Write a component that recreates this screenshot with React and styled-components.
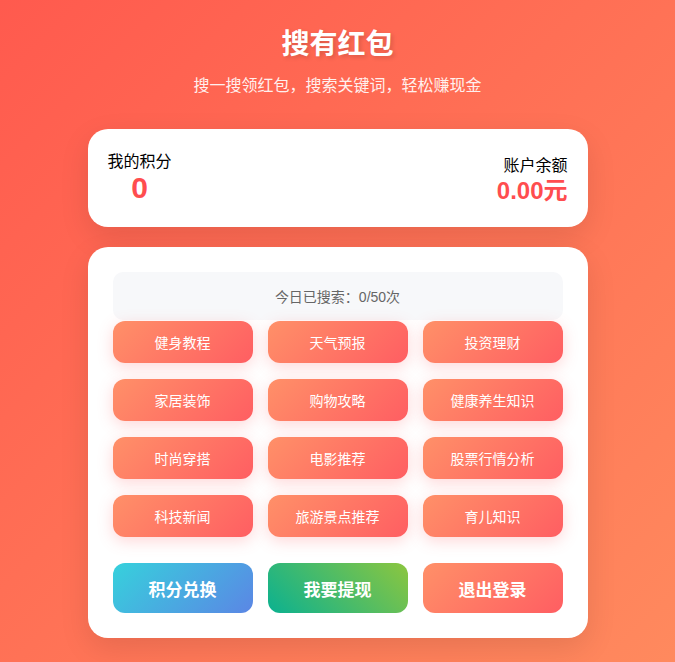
import React from 'react';
import styled, { createGlobalStyle } from 'styled-components';

const GlobalStyle = createGlobalStyle`
  html, body {
    margin: 0;
    padding: 0;
  }
  body {
    font-family: "Liberation Sans", "Noto Sans CJK SC", sans-serif;
    background: linear-gradient(135deg, #ff5a4e 0%, #ff8a5e 100%);
    min-height: 100vh;
  }
`;

const Page = styled.div`
  max-width: 500px;
  margin: 0 auto;
  padding: 21px 0 20px;
`;

const Header = styled.div`
  text-align: center;
  color: #fff;
  margin-bottom: 32px;
`;

const Title = styled.h1`
  margin: 0;
  padding-top: 4px;
  font-size: 28px;
  line-height: 40px;
  font-weight: bold;
  text-shadow: 2px 2px 4px rgba(0, 0, 0, 0.15);
`;

const Subtitle = styled.p`
  margin: 10px 0 0;
  font-size: 16px;
  line-height: 22px;
  opacity: 0.9;
`;

const Card = styled.div`
  background: #fff;
  border-radius: 20px;
  box-shadow: 0 10px 30px rgba(0, 0, 0, 0.1);
  padding: ${(p) => p.$pad || '20px'};
  margin-bottom: 20px;
`;

const BalanceRow = styled.div`
  display: flex;
  justify-content: space-between;
  align-items: center;
  height: 58px;
`;

const Stat = styled.div`
  display: flex;
  flex-direction: column;
  align-items: ${(p) => (p.$right ? 'flex-end' : 'center')};
  padding-top: ${(p) => (p.$right ? '6px' : '0')};
`;

const StatLabel = styled.div`
  font-size: 16px;
  line-height: 20px;
  color: #000;
`;

const StatValue = styled.div`
  font-size: ${(p) => p.$size || '30px'};
  line-height: ${(p) => (p.$size ? '30px' : '32px')};
  font-weight: bold;
  color: #ff4d4f;
`;

const Counter = styled.div`
  background: #f7f8fa;
  border-radius: 10px;
  height: 48px;
  display: flex;
  align-items: center;
  justify-content: center;
  font-size: 14px;
  color: #666;
  margin-bottom: 1px;
`;

const KeywordGrid = styled.div`
  display: grid;
  grid-template-columns: repeat(3, 1fr);
  column-gap: 15px;
  row-gap: 16px;
`;

const Keyword = styled.button`
  height: 42px;
  border: none;
  border-radius: 12px;
  background: linear-gradient(135deg, #ff9068 0%, #ff5e62 100%);
  color: #fff;
  font-family: inherit;
  font-size: 14px;
  box-shadow: 0 4px 15px rgba(255, 94, 98, 0.25);
  cursor: pointer;
`;

const Actions = styled.div`
  display: grid;
  grid-template-columns: repeat(3, 1fr);
  column-gap: 15px;
  margin-top: 26px;
`;

const gradients = {
  blue: 'linear-gradient(135deg, #36d1dc 0%, #5b86e5 100%)',
  green: 'linear-gradient(45deg, #0bb190 0%, #8cc63f 100%)',
  red: 'linear-gradient(135deg, #ff9068 0%, #ff5e62 100%)',
};

const ActionButton = styled.button`
  height: 50px;
  border: none;
  border-radius: 12px;
  background: ${(p) => gradients[p.$tone]};
  color: #fff;
  font-family: inherit;
  font-size: 17px;
  font-weight: bold;
  cursor: pointer;
`;

const keywords = [
  '健身教程', '天气预报', '投资理财',
  '家居装饰', '购物攻略', '健康养生知识',
  '时尚穿搭', '电影推荐', '股票行情分析',
  '科技新闻', '旅游景点推荐', '育儿知识',
];

export default function App() {
  return (
    <>
      <GlobalStyle />
      <Page>
        <Header>
          <Title>搜有红包</Title>
          <Subtitle>搜一搜领红包，搜索关键词，轻松赚现金</Subtitle>
        </Header>

        <Card>
          <BalanceRow>
            <Stat>
              <StatLabel>我的积分</StatLabel>
              <StatValue>0</StatValue>
            </Stat>
            <Stat $right>
              <StatLabel>账户余额</StatLabel>
              <StatValue $size="24px">0.00元</StatValue>
            </Stat>
          </BalanceRow>
        </Card>

        <Card $pad="25px">
          <Counter>今日已搜索：0/50次</Counter>
          <KeywordGrid>
            {keywords.map((k) => (
              <Keyword key={k}>{k}</Keyword>
            ))}
          </KeywordGrid>
          <Actions>
            <ActionButton $tone="blue">积分兑换</ActionButton>
            <ActionButton $tone="green">我要提现</ActionButton>
            <ActionButton $tone="red">退出登录</ActionButton>
          </Actions>
        </Card>
      </Page>
    </>
  );
}
